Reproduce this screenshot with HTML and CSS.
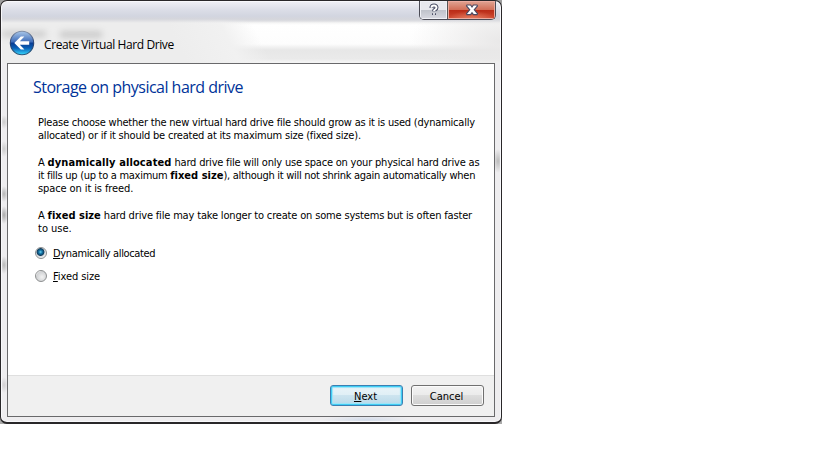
FILE: index.html
```
<!DOCTYPE html>
<html lang="en">
<head>
<meta charset="utf-8">
<title>Create Virtual Hard Drive</title>
<link rel="stylesheet" href="styles.css">
</head>
<body>
<div class="backdrop">
<main class="window">
  <header class="titlebar">
    <div class="glass"></div>
    <div class="smudge one"></div><div class="smudge two"></div>
    <div class="caption">
      <button class="help" aria-label="Help"><svg width="14" height="14" viewBox="0 0 14 14"><path d="M4.5 5V4.2Q4.8 2.5 7 2.5T9.5 4.5Q9.5 5.7 8.2 6.5Q7 7.2 7 8.3M7 10.2V12" fill="none" stroke="#4c5068" stroke-width="4"/><path d="M4.5 4.8V4.2Q4.8 2.5 7 2.5T9.5 4.5Q9.5 5.7 8.2 6.5Q7 7.2 7 8.1M7 10.2V11.7" fill="none" stroke="#fff" stroke-width="1.9"/></svg></button>
      <button class="close" aria-label="Close"><svg width="14" height="12" viewBox="0 0 14 12"><path d="M2 1H5.6L7 3L8.4 1H12L12.5 2L9.3 5.8L12.5 9.7L12 10.7H8.4L7 8.7L5.6 10.7H2L1.5 9.7L4.7 5.8L1.5 2Z" fill="#fff" stroke="#4d4b62" stroke-width="1.2"/></svg></button>
    </div>
    <div class="heading">
      <svg class="back" width="26" height="26" viewBox="0 0 26 26">
        <defs>
          <linearGradient id="orb" x2="0" y2="1"><stop stop-color="#a9c6e8"/><stop offset=".46" stop-color="#3d6cb9"/><stop offset=".5" stop-color="#083b91"/><stop offset=".72" stop-color="#0961b7"/><stop offset="1" stop-color="#37d9ff"/></linearGradient>
          <linearGradient id="rim" x2="0" y2="1"><stop stop-color="#8190a8"/><stop offset=".5" stop-color="#223d70"/><stop offset="1" stop-color="#27587c"/></linearGradient>
        </defs>
        <circle cx="13" cy="13" r="11.7" fill="url(#orb)" stroke="url(#rim)" stroke-width="1.1"/>
        <path d="M5.3 13L11.8 6.5H15.4L10.8 11.2H20.2V14.8H10.8L15.4 19.4H11.8Z" fill="#fff"/>
      </svg>
      <span class="title">Create Virtual Hard Drive</span>
    </div>
  </header>
  <section class="client">
    <div class="page">
      <h1>Storage on physical hard drive</h1>
      <div class="copy">
        <p><span class="l1">Please choose whether the new virtual hard drive file should grow as it is used (dynamically</span><br><span class="l2">allocated) or if it should be created at its maximum size (fixed size).</span></p>
        <p><span class="l3">A <b class="wide">dynamically allocated</b> hard drive file will only use space on your physical hard drive as</span><br><span class="l4">it fills up (up to a maximum <b>fixed size</b>), although it will not shrink again automatically when</span><br><span class="l5">space on it is freed.</span></p>
        <p><span class="l6">A <b>fixed size</b> hard drive file may take longer to create on some systems but is often faster</span><br><span class="l7">to use.</span></p>
      </div>
      <div class="choice"><i class="radio checked"></i><span class="dynamic"><u>D</u>ynamically allocated</span></div>
      <div class="choice"><i class="radio"></i><span class="fixed"><u>F</u>ixed size</span></div>
    </div>
    <footer><button class="btn next"><span><u>N</u>ext</span></button><button class="btn"><span>Cancel</span></button></footer>
  </section>
</main>
</div>
</body>
</html>
```
FILE: styles.css
```
* { box-sizing: border-box; }
body { margin: 0; background: #fff; font-family: "DejaVu Sans Condensed", "DejaVu Sans", sans-serif; font-stretch: condensed; font-size: 11px; color: #000; overflow: hidden; }
button { padding: 0; font: inherit; }
p, h1 { margin: 0; }
u { text-decoration: underline; text-underline-offset: 1px; text-decoration-thickness: 1px; }
.backdrop { width: 502px; height: 424px; background: linear-gradient(#9e9e9e, #aaa); }
.window { position: relative; width: 502px; height: 424px; border: 1px solid #292729; border-bottom-width: 2px; border-radius: 7px; padding: 0 6px 6px; overflow: hidden; box-shadow: inset 0 0 0 1px #f8f8fb; background: #eeedef;
  background-image:
   radial-gradient(ellipse 4px 7px at 3px 121px, #ccc, transparent),
   radial-gradient(ellipse 4px 8px at 3px 148px, #ccc, transparent),
   radial-gradient(ellipse 4px 8px at 3px 193px, #b5b5b5, transparent),
   radial-gradient(ellipse 4px 9px at 3px 214px, #a9a9a9, transparent),
   radial-gradient(ellipse 4px 9px at 3px 264px, #b8b8b8, transparent),
   radial-gradient(ellipse 4px 8px at 3px 384px, #d2d0d2, transparent),
   radial-gradient(ellipse 5px 12px at 497px 160px, #bbb, transparent),
   radial-gradient(ellipse 45px 5px at 365px 419px, #d3dcea, transparent); }
.titlebar { height: 62px; }
.glass { position: absolute; inset: 0 0 auto; height: 62px; background: radial-gradient(ellipse 90px 50px at 500px 40px, #e9e8e8, transparent), linear-gradient(63deg, #ededed 35%, #f1f1f1 45%, #f1f1f100 51%), linear-gradient(#eeeef6 0, #dcdfe9 8px, #d1d5e0 15px, #d5d6dc 18px, #f2f2f2 21px, #fff 24px, #fdfdfd 43px, #e7e7e7 49px, #eaeaea 58px, #f4f4f4 61px); clip-path: inset(1px 1px 0 1px round 6px 6px 0 0); }
.glass::after { content: ""; position: absolute; inset: 1px 0 auto; height: 21px; background: linear-gradient(#eeeef4, #dddfe8 7px, #d2d5e0 14px, #d5d6dc 17px, #d5d6dc00); }
.smudge { position: absolute; background: #999; filter: blur(3px); opacity: .4; }
.one { left: 1px; top: 30px; width: 44px; height: 6px; }
.two { left: 59px; top: 30px; width: 42px; height: 7px; }
.caption { position: absolute; top: 0; right: 5px; width: 77px; height: 19px; display: flex; border: 1px solid #4b4b55; border-top: 0; border-radius: 0 0 5px 5px; overflow: hidden; }
.caption button { display: flex; align-items: center; justify-content: center; border: 0; }
.help { width: 28px; border-right: 1px solid #555 !important; background: linear-gradient(#e8e9ee 0 48%, #bfc2ca 50%, #d8d9e1); box-shadow: inset 0 0 0 1px #f0f1f6; }
.close { width: 47px; background: radial-gradient(ellipse 25px 8px at 50% 100%, #e58062, transparent), linear-gradient(#e0a594 0, #d26f58 48%, #b92b16 50%, #cf4932 100%); box-shadow: inset 0 0 0 1px #edaca0; }
.heading { position: relative; display: flex; align-items: center; padding: 29px 0 0 2px; }
.back { flex: none; }
.title { margin-left: 9px; font: 12px/18px "Open Sans", sans-serif; letter-spacing: -.4px; white-space: nowrap; padding-top: 4px; }
.client { position: relative; width: 488px; height: 354px; border: 1px solid #69696b; background: #fff; display: flex; flex-direction: column; }
.page { height: 311px; padding: 12px 0 0 25px; }
h1 { font: 16px/22px "Open Sans", sans-serif; color: #003399; letter-spacing: -.52px; white-space: nowrap; }
.copy { padding: 18px 0 0 5px; line-height: 13.3px; white-space: nowrap; }
.copy p + p { margin-top: 13.3px; }
.l1, .l2 { letter-spacing: -.21px; }
.l3 { letter-spacing: -.2px; }
.l4 { letter-spacing: -.28px; }
.l5 { letter-spacing: -.1px; }
.l6 { letter-spacing: -.17px; }
.copy b { letter-spacing: .02px; }
.copy b.wide { letter-spacing: .12px; }
.dynamic { letter-spacing: -.35px; }
.fixed { letter-spacing: -.08px; }
.choice { display: flex; align-items: center; height: 23px; padding-left: 2px; white-space: nowrap; }
.copy + .choice { margin-top: 5px; }
.choice span { margin-left: 6px; padding-top: 3px; }
.radio { width: 12px; height: 12px; border: 1px solid #8d8f90; border-radius: 50%; background: radial-gradient(circle at 60% 60%, #f2f2f2 0, #cfd1d3 65%, #fafafa 72%); }
.checked { background: radial-gradient(circle at 45% 40%, #6fd4f0 0, #1679ac 20%, #103b5c 43%, #d5d9dd 53%, #f5f5f5 75%); }
.choice .radio { position: relative; top: 1px; }
footer { height: 41px; border-top: 1px solid #dfdfdf; background: #f0f0f0; display: flex; justify-content: flex-end; gap: 8px; padding: 9px 10px 0 0; }
.btn { width: 73px; height: 21px; border: 1px solid #707070; border-radius: 3px; background: linear-gradient(#f2f2f2, #ebebeb 48%, #dddddd 50%, #cfcfcf); box-shadow: inset 0 0 0 1px #fbfbfb; color: #000; line-height: 17px; }
.btn span { position: relative; left: -1px; top: 1px; }
.next { border-color: #3c7fb1; background: linear-gradient(#eaf4f8, #e0eff6 48%, #cde4ef 50%, #b9d9e9); box-shadow: inset 0 0 0 1px #3fcdf5, inset 0 0 1px 2px #9be4f8; }
```
